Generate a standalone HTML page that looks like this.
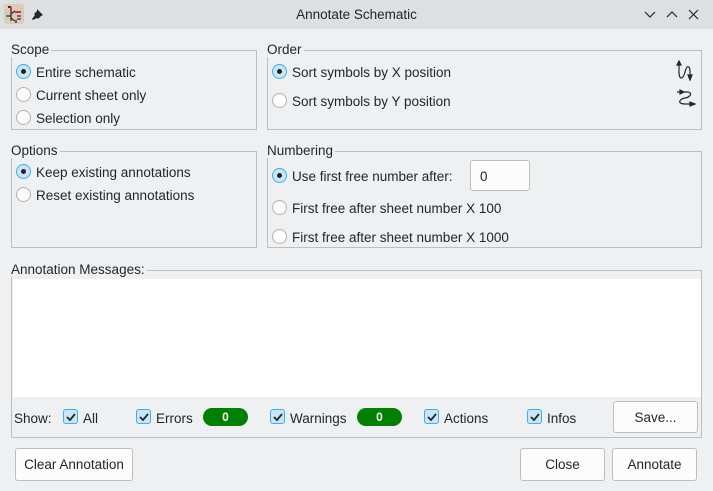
<!DOCTYPE html>
<html><head><style>
*{box-sizing:border-box;margin:0;padding:0}
body{width:713px;height:491px;background:#eff0f1;font-family:"Liberation Sans","DejaVu Sans",sans-serif;font-size:13.5px;color:#232629;position:relative;overflow:hidden}
.a{position:absolute;white-space:nowrap}
.t{margin-top:1px}
.tb{left:0;top:0;width:713px;height:29px;background:#dedfe0}
.fr{position:absolute;border:1px solid #bcbebf}
.lb{position:absolute;background:#eff0f1;padding-right:2px;line-height:14px}
.r{position:absolute;width:15px;height:15px;border:1px solid #b0b2b4;border-radius:50%;background:#fcfcfc}
.r.on{border-color:#3daee9;background:#c9e6f6}
.r.on::after{content:"";position:absolute;left:4px;top:4px;width:5px;height:5px;border-radius:50%;background:#232629}
.c{position:absolute;width:15px;height:15px;border:1px solid #3daee9;border-radius:3px;background:#c9e6f6}
.c svg{position:absolute;left:1px;top:1px}
.btn{position:absolute;border:1px solid #bcbebf;border-radius:3px;background:#fcfcfc;text-align:center;line-height:32px}
.pill{position:absolute;width:45px;height:18px;border-radius:9px;background:#008000;color:#fff;font-weight:bold;text-align:center;line-height:18px;font-size:12px}
</style></head><body>
<div class="a tb"></div>
<svg class="a" style="left:4px;top:4px" width="20" height="20"><rect width="20" height="20" rx="3" fill="#d9cdb5"/><rect x="4" y="2" width="3" height="2" fill="#333"/><rect x="11" y="7" width="6" height="2" fill="#e0245e"/><path d="M2 12h5M7 7v10M7 10l4-3M7 14l4 3M13 12h4M13 15h4" stroke="#333" stroke-width="1.3" fill="none"/><rect x="6" y="3" width="2" height="4" fill="#e0245e"/><rect x="11" y="16" width="2" height="3" fill="#e0245e"/></svg>
<svg class="a" style="left:32px;top:8px" width="12" height="12"><path d="M5 1l6 6-2 1-3 3-1-1L1 12 0 11l3-4-1-1 3-3z" fill="#232629"/></svg>
<div class="a" style="left:0;width:713px;top:7px;text-align:center">Annotate Schematic</div>
<svg class="a" style="left:644px;top:9px" width="60" height="12" fill="none" stroke="#232629" stroke-width="1.2"><path d="M1 3l5 5 5-5M23 8l5-5 5 5M45 1l9 9M54 1l-9 9"/></svg>

<div class="fr" style="left:11px;top:50px;width:246px;height:80px"></div><div class="lb" style="left:11px;top:43px">Scope</div>
<div class="r on" style="left:16px;top:64px"></div><div class="a t" style="left:36px;top:64px">Entire schematic</div>
<div class="r" style="left:16px;top:87px"></div><div class="a t" style="left:36px;top:87px">Current sheet only</div>
<div class="r" style="left:16px;top:110px"></div><div class="a t" style="left:36px;top:110px">Selection only</div>

<div class="fr" style="left:267px;top:50px;width:435px;height:80px"></div><div class="lb" style="left:267px;top:43px">Order</div>
<div class="r on" style="left:272px;top:64px"></div><div class="a t" style="left:292px;top:64px">Sort symbols by X position</div>
<div class="r" style="left:272px;top:93px"></div><div class="a t" style="left:292px;top:93px">Sort symbols by Y position</div>
<svg class="a" style="left:675px;top:60px" width="22" height="22" fill="none" stroke="#232629" stroke-width="1.2"><path d="M4 2v10c0 8 4 8 6 0s5-6 5 0v8"/><path d="M2 5l2-4 2 4z M13 15l2 5 2-5z" fill="#232629"/></svg>
<svg class="a" style="left:675px;top:88px" width="22" height="22" fill="none" stroke="#232629" stroke-width="1.2"><path d="M2 4h10c6 0 4 5-2 6s-8 6 0 6h8"/><path d="M5 2l4 2-4 2z M15 14l5 2-5 2z" fill="#232629"/></svg>

<div class="fr" style="left:11px;top:151px;width:246px;height:97px"></div><div class="lb" style="left:11px;top:144px">Options</div>
<div class="r on" style="left:16px;top:164px"></div><div class="a t" style="left:36px;top:164px">Keep existing annotations</div>
<div class="r" style="left:16px;top:187px"></div><div class="a t" style="left:36px;top:187px">Reset existing annotations</div>

<div class="fr" style="left:267px;top:151px;width:435px;height:97px"></div><div class="lb" style="left:267px;top:144px">Numbering</div>
<div class="r on" style="left:272px;top:168px"></div><div class="a t" style="left:292px;top:168px">Use first free number after:</div>
<div class="a" style="left:470px;top:160px;width:60px;height:31px;background:#fcfcfc;border:1px solid #bcbebf;border-radius:3px;padding:8px 0 0 9px">0</div>
<div class="r" style="left:272px;top:200px"></div><div class="a t" style="left:292px;top:200px">First free after sheet number X 100</div>
<div class="r" style="left:272px;top:229px"></div><div class="a t" style="left:292px;top:229px">First free after sheet number X 1000</div>

<div class="fr" style="left:11px;top:270px;width:691px;height:168px"></div><div class="lb" style="left:11px;top:263px">Annotation Messages:</div>
<div class="a" style="left:13px;top:279px;width:688px;height:118px;background:#fff"></div>
<div class="a t" style="left:14px;top:410px">Show:</div>
<div class="c" style="left:63px;top:409px"><svg width="12" height="12"><path d="M2 6l3 3 5-6" stroke="#232629" stroke-width="1.8" fill="none"/></svg></div><div class="a t" style="left:83px;top:410px">All</div>
<div class="c" style="left:136px;top:409px"><svg width="12" height="12"><path d="M2 6l3 3 5-6" stroke="#232629" stroke-width="1.8" fill="none"/></svg></div><div class="a t" style="left:156px;top:410px">Errors</div>
<div class="pill" style="left:203px;top:408px">0</div>
<div class="c" style="left:270px;top:409px"><svg width="12" height="12"><path d="M2 6l3 3 5-6" stroke="#232629" stroke-width="1.8" fill="none"/></svg></div><div class="a t" style="left:290px;top:410px">Warnings</div>
<div class="pill" style="left:357px;top:408px">0</div>
<div class="c" style="left:424px;top:409px"><svg width="12" height="12"><path d="M2 6l3 3 5-6" stroke="#232629" stroke-width="1.8" fill="none"/></svg></div><div class="a t" style="left:444px;top:410px">Actions</div>
<div class="c" style="left:527px;top:409px"><svg width="12" height="12"><path d="M2 6l3 3 5-6" stroke="#232629" stroke-width="1.8" fill="none"/></svg></div><div class="a t" style="left:547px;top:410px">Infos</div>
<div class="btn" style="left:613px;top:401px;width:85px;height:32px">Save...</div>

<div class="btn" style="left:15px;top:448px;width:118px;height:33px">Clear Annotation</div>
<div class="btn" style="left:520px;top:448px;width:85px;height:33px">Close</div>
<div class="btn" style="left:612px;top:448px;width:85px;height:33px">Annotate</div>
</body></html>
